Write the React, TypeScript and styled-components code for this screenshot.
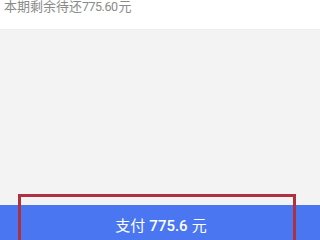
import * as React from 'react';
import styled, { createGlobalStyle } from 'styled-components';

const GlobalStyle = createGlobalStyle`
  html, body {
    margin: 0;
    padding: 0;
    background: #f3f3f3;
    font-family: Roboto, "Noto Sans CJK SC", sans-serif;
  }
  #root {
    height: 240px;
  }
`;

const Page = styled.div`
  width: 320px;
  height: 240px;
  display: flex;
  flex-direction: column;
  overflow: hidden;
  background: #f3f3f3;
`;

const Header = styled.div`
  height: 30px;
  flex: 0 0 auto;
  background: #ffffff;
  border-bottom: 1px solid #eeeeee;
  box-sizing: border-box;
  padding: 0 4px;
  overflow: hidden;
`;

const RemainText = styled.div`
  margin-top: -2px;
  font-size: 13px;
  line-height: 17px;
  color: #8a8a8a;
  white-space: nowrap;
`;

const RemainNum = styled.span`
  font-size: 12.5px;
  letter-spacing: -0.5px;
  margin-right: 1px;
`;

const Body = styled.div`
  flex: 1 1 auto;
  background: #f3f3f3;
`;

const Footer = styled.div`
  flex: 0 0 auto;
  height: 46px;
  display: flex;
  flex-direction: column;
  padding: 0 24px 0 18px;
`;

const Highlight = styled.div`
  flex: 1 1 auto;
  border: 3px solid #b0303f;
  border-bottom: none;
  box-sizing: border-box;
`;

const PayBar = styled.button`
  position: absolute;
  left: 0;
  right: 0;
  bottom: 0;
  height: 35px;
  border: none;
  margin: 0;
  padding: 0 0 5px 2px;
  background: #4a76f2;
  color: #ffffff;
  font-family: Roboto, "Noto Sans CJK SC", sans-serif;
  font-size: 15px;
  display: flex;
  align-items: flex-end;
  justify-content: center;
  box-sizing: border-box;
`;

const Amount = styled.span`
  font-weight: 500;
  margin: 0 4px;
`;

const FooterWrap = styled.div`
  position: relative;
  flex: 0 0 auto;
`;

const Overlay = styled.div`
  position: relative;
  z-index: 1;
  pointer-events: none;
`;

export default function App() {
  return (
    <Page>
      <GlobalStyle />
      <Header>
        <RemainText>
          本期剩余待还<RemainNum>775.60</RemainNum>元
        </RemainText>
      </Header>
      <Body />
      <FooterWrap>
        <PayBar>
          支付<Amount>775.6</Amount>元
        </PayBar>
        <Overlay>
          <Footer>
            <Highlight />
          </Footer>
        </Overlay>
      </FooterWrap>
    </Page>
  );
}
